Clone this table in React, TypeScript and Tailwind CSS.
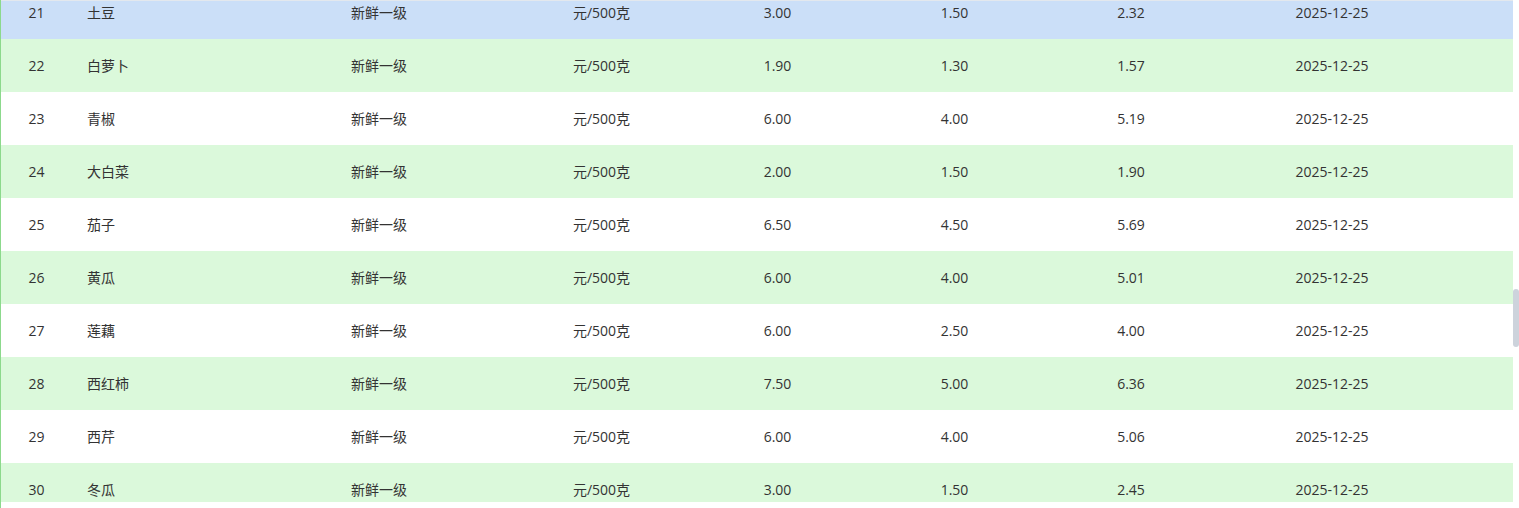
const rows = [
  { id: 21, name: '土豆', max: '3.00', min: '1.50', avg: '2.32' },
  { id: 22, name: '白萝卜', max: '1.90', min: '1.30', avg: '1.57' },
  { id: 23, name: '青椒', max: '6.00', min: '4.00', avg: '5.19' },
  { id: 24, name: '大白菜', max: '2.00', min: '1.50', avg: '1.90' },
  { id: 25, name: '茄子', max: '6.50', min: '4.50', avg: '5.69' },
  { id: 26, name: '黄瓜', max: '6.00', min: '4.00', avg: '5.01' },
  { id: 27, name: '莲藕', max: '6.00', min: '2.50', avg: '4.00' },
  { id: 28, name: '西红柿', max: '7.50', min: '5.00', avg: '6.36' },
  { id: 29, name: '西芹', max: '6.00', min: '4.00', avg: '5.06' },
  { id: 30, name: '冬瓜', max: '3.00', min: '1.50', avg: '2.45' },
];

export default function App() {
  return (
    <div
      className="flex h-[508px] w-[1519px] bg-white border-l border-[#8cd98c] text-[14px] text-[#333]"
      style={{ fontFamily: '"Open Sans", "Noto Sans CJK SC", sans-serif' }}
    >
      {/* table body, scrolled */}
      <div className="w-[1512px]">
        <div className="h-[502px] overflow-hidden border-t border-[#e3e8ee]">
          <div className="-mt-[15px]">
            {rows.map((r, i) => (
              <div
                key={r.id}
                className={
                  'grid h-[53px] items-center grid-cols-[71px_196px_222px_223px_129px_225px_128px_274px_1fr] ' +
                  (i === 0 ? 'bg-[#cbdff8]' : i % 2 === 1 ? 'bg-[#dbf9db]' : 'bg-white')
                }
              >
                <div className="text-center">{r.id}</div>
                <div className="pl-[15px]">{r.name}</div>
                <div className="text-center">新鲜一级</div>
                <div className="text-center">元/500克</div>
                <div className="text-center">{r.max}</div>
                <div className="text-center">{r.min}</div>
                <div className="text-center">{r.avg}</div>
                <div className="text-center">2025-12-25</div>
                <div />
              </div>
            ))}
          </div>
        </div>
      </div>

      {/* scrollbar */}
      <div className="w-[6px] pt-[289px]">
        <div className="h-[58px] rounded-full bg-[#cdd3dc]" />
      </div>
    </div>
  );
}
